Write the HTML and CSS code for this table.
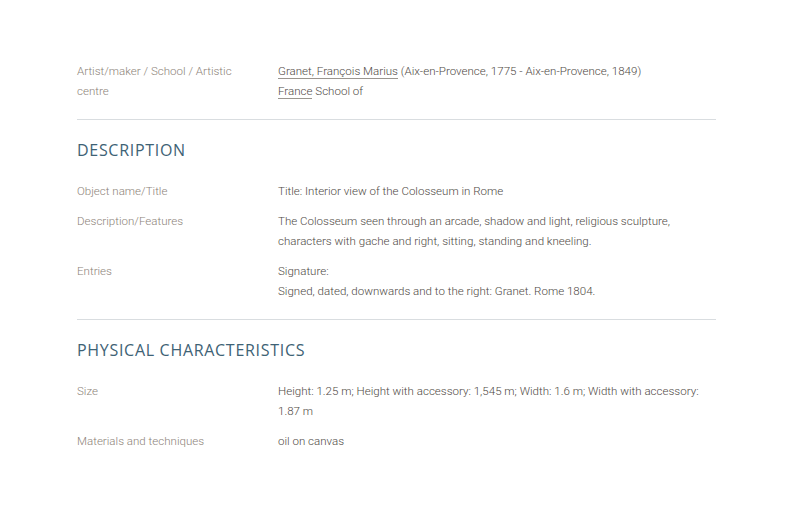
FILE: index.html
```html
<!DOCTYPE html>
<html lang="en">
<head>
<meta charset="utf-8">
<title>Interior view of the Colosseum in Rome</title>
<link rel="stylesheet" href="styles.css">
</head>
<body>
<main class="record">
  <section class="block block-first">
    <div class="row">
      <div class="label">Artist/maker / School / Artistic centre</div>
      <div class="value">
        <div><a href="#" class="link">Granet, François Marius</a> (Aix-en-Provence, 1775 - Aix-en-Provence, 1849)</div>
        <div><a href="#" class="link">France</a> School of</div>
      </div>
    </div>
  </section>
  <section class="block">
    <h2 class="heading">Description</h2>
    <div class="row">
      <div class="label">Object name/Title</div>
      <div class="value">Title: Interior view of the Colosseum in Rome</div>
    </div>
    <div class="row">
      <div class="label">Description/Features</div>
      <div class="value">The Colosseum seen through an arcade, shadow and light, religious sculpture, characters with gache and right, sitting, standing and kneeling.</div>
    </div>
    <div class="row">
      <div class="label">Entries</div>
      <div class="value">
        <div>Signature:</div>
        <div>Signed, dated, downwards and to the right: Granet. Rome 1804.</div>
      </div>
    </div>
  </section>
  <section class="block block-last">
    <h2 class="heading">Physical characteristics</h2>
    <div class="row">
      <div class="label">Size</div>
      <div class="value">Height: 1.25 m; Height with accessory: 1,545 m; Width: 1.6 m; Width with accessory: 1.87 m</div>
    </div>
    <div class="row">
      <div class="label">Materials and techniques</div>
      <div class="value">oil on canvas</div>
    </div>
  </section>
</main>
</body>
</html>
```
FILE: styles.css
```css
* { box-sizing: border-box; }
html, body { margin: 0; padding: 0; background: #ffffff; }
body {
  font-family: Roboto, "Liberation Sans", sans-serif;
  font-size: 11.55px;
  line-height: 20px;
  font-weight: 300;
  color: #5a5550;
}
.record {
  width: 639px;
  margin: 0 0 0 77px;
  padding-top: 61px;
}
.block {
  border-bottom: 1px solid #d9dde0;
  padding: 0 0 18px 0;
}
.block + .block { padding-top: 20px; }
.block-last { border-bottom: none; }
.heading {
  margin: 0 0 21px 0;
  font-family: "Open Sans", sans-serif;
  font-weight: 400;
  font-size: 16px;
  line-height: 20px;
  letter-spacing: 0.7px;
  text-transform: uppercase;
  color: #3e6275;
}
.row {
  display: grid;
  grid-template-columns: 201px 1fr;
}
.row + .row { margin-top: 10px; }
.label {
  color: #8d8379;
  padding-right: 30px;
}
.value { color: #4f4a45; }
.link {
  color: inherit;
  text-decoration: none;
  border-bottom: 1px solid #9a958f;
}
```
